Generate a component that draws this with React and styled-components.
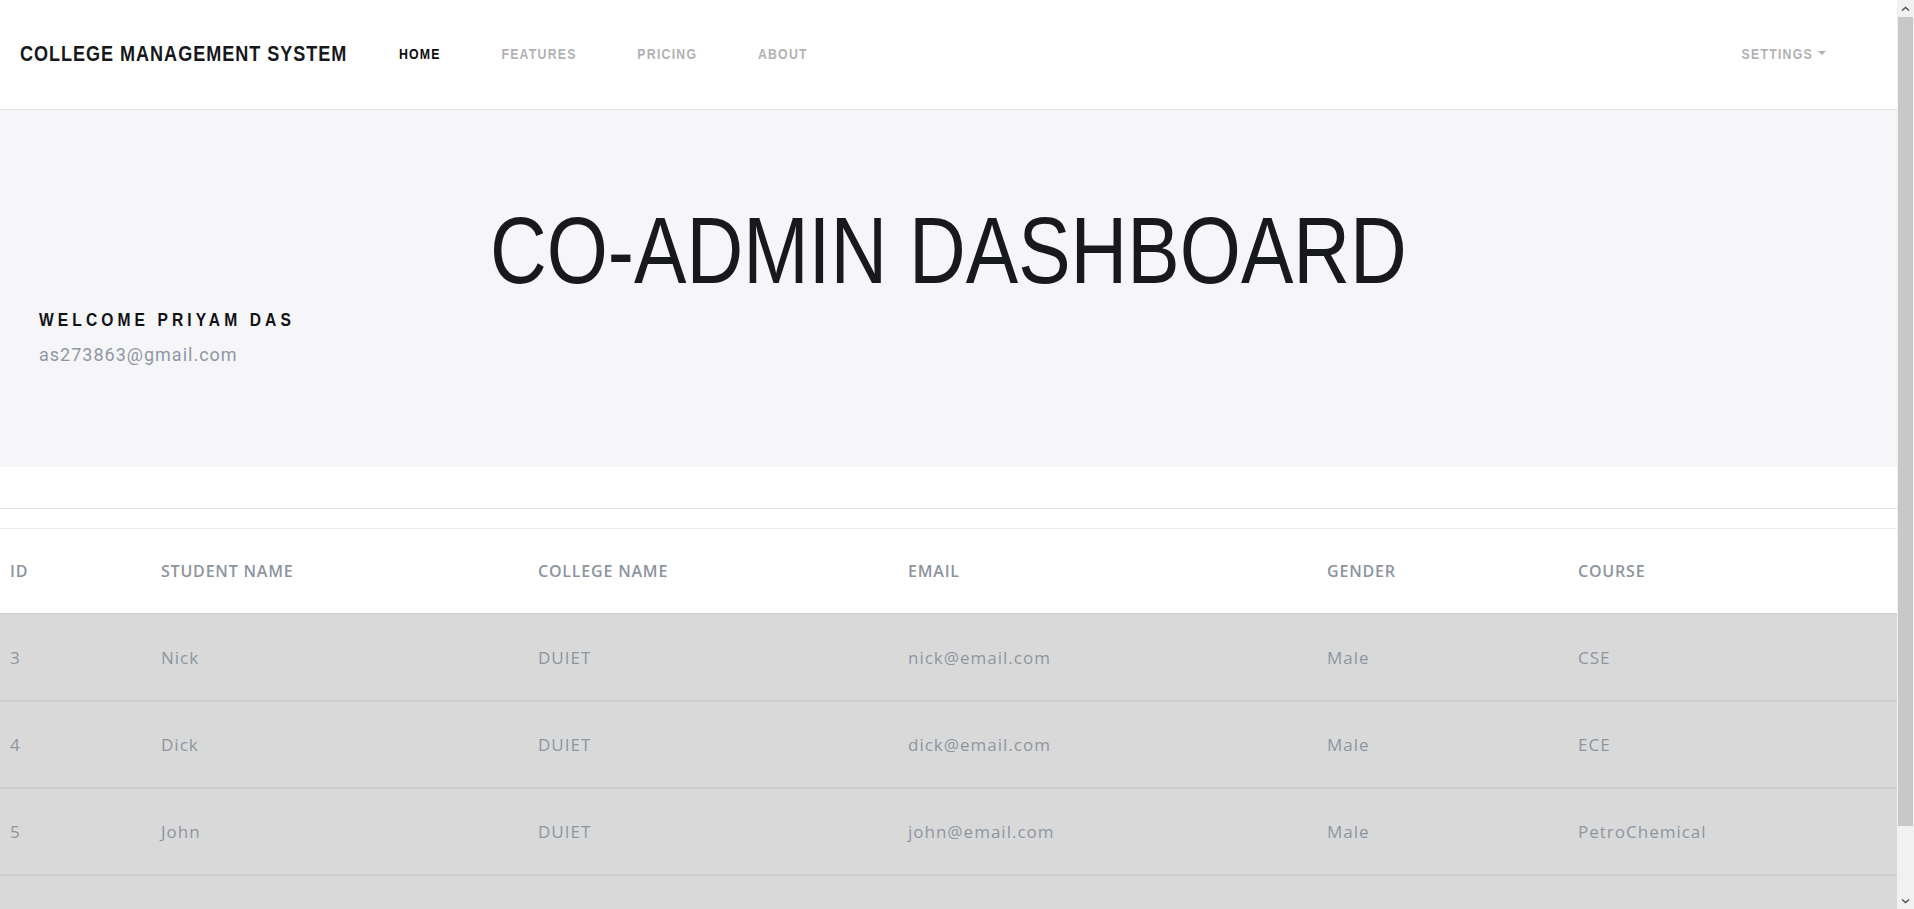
import React from 'react';
import styled, { createGlobalStyle } from 'styled-components';

const GlobalStyle = createGlobalStyle`
  * { box-sizing: border-box; }
  body {
    margin: 0;
    overflow: hidden;
    background: #ffffff;
    font-family: "Open Sans", "Liberation Sans", sans-serif;
  }
`;

// no narrow face installed, so the condensed headings squeeze Liberation Sans
const narrow = `"Liberation Sans", Arial, sans-serif`;

const students = [
  { id: 3, name: 'Nick', college: 'DUIET', email: 'nick@email.com', gender: 'Male', course: 'CSE' },
  { id: 4, name: 'Dick', college: 'DUIET', email: 'dick@email.com', gender: 'Male', course: 'ECE' },
  { id: 5, name: 'John', college: 'DUIET', email: 'john@email.com', gender: 'Male', course: 'PetroChemical' },
  { id: 6, name: 'Harry', college: 'DUIET', email: 'harry@email.com', gender: 'Male', course: 'ME' },
];

const Chevron = ({ down }) => (
  <svg width="9" height="6" viewBox="0 0 9 6">
    <polyline
      points={down ? '1,1.5 4.5,4.5 8,1.5' : '1,4.5 4.5,1.5 8,4.5'}
      fill="none"
      stroke="#505050"
      strokeWidth="1.4"
    />
  </svg>
);

const App = () => (
  <Window>
    <GlobalStyle />
    <Page>
      <NavBar>
        <NavGroup>
          <Brand>College Management System</Brand>
          <NavLinks>
            <NavLink active>Home</NavLink>
            <NavLink>Features</NavLink>
            <NavLink>Pricing</NavLink>
            <NavLink>About</NavLink>
          </NavLinks>
        </NavGroup>
        <Settings>
          Settings
          <Caret />
        </Settings>
      </NavBar>

      <Hero>
        <TitleRow>
          <Title>CO-ADMIN DASHBOARD</Title>
        </TitleRow>
        <Welcome>Welcome Priyam Das</Welcome>
        <Email>as273863@gmail.com</Email>
      </Hero>

      <Divider />

      <Table>
        <thead>
          <tr>
            <Th width="151px">ID</Th>
            <Th width="377px">Student Name</Th>
            <Th width="370px">College Name</Th>
            <Th width="419px">Email</Th>
            <Th width="251px">Gender</Th>
            <Th>Course</Th>
          </tr>
        </thead>
        <tbody>
          {students.map((s) => (
            <Row key={s.id}>
              <Td>{s.id}</Td>
              <Td>{s.name}</Td>
              <Td>{s.college}</Td>
              <Td>{s.email}</Td>
              <Td>{s.gender}</Td>
              <Td>{s.course}</Td>
            </Row>
          ))}
        </tbody>
      </Table>
    </Page>

    <ScrollBar>
      <ScrollButton><Chevron /></ScrollButton>
      <ScrollTrack>
        <ScrollThumb />
      </ScrollTrack>
      <ScrollButton><Chevron down /></ScrollButton>
    </ScrollBar>
  </Window>
);

const Window = styled.div`
  display: flex;
  height: 100vh;
`;

const Page = styled.main`
  flex: 1;
  min-width: 0;
  overflow: hidden;
`;

const ScrollBar = styled.aside`
  width: 17px;
  flex-shrink: 0;
  display: flex;
  flex-direction: column;
  background: #f1f1f1;
`;

const ScrollButton = styled.div`
  height: 17px;
  display: flex;
  align-items: center;
  justify-content: center;
`;

const ScrollTrack = styled.div`
  flex: 1;
  padding: 0 1px;
`;

const ScrollThumb = styled.div`
  height: 809px;
  background: #c8c8c8;
`;

const NavBar = styled.nav`
  display: flex;
  align-items: center;
  justify-content: space-between;
  height: 110px;
  padding: 0 71px 2px 20px;
  background: #ffffff;
  border-bottom: 1px solid #e3e3e6;
`;

const NavGroup = styled.div`
  display: flex;
  align-items: center;
  transform: scaleX(0.82);
  transform-origin: left center;
`;

const Brand = styled.div`
  font-family: ${narrow};
  font-size: 22px;
  font-weight: 700;
  letter-spacing: 1.2px;
  text-transform: uppercase;
  white-space: nowrap;
  color: #16181c;
  margin-right: 26px;
`;

const NavLinks = styled.ul`
  display: flex;
  list-style: none;
  margin: 0;
  padding: 0;
`;

const NavLink = styled.li`
  padding: 0 37px;
  font-family: ${narrow};
  font-size: 15px;
  font-weight: 700;
  letter-spacing: 1.5px;
  text-transform: uppercase;
  color: ${(p) => (p.active ? '#0b0b0d' : '#b2b2b4')};
  cursor: pointer;
`;

const Settings = styled.div`
  display: flex;
  align-items: center;
  gap: 6px;
  font-family: ${narrow};
  font-size: 15px;
  font-weight: 700;
  letter-spacing: 1.5px;
  text-transform: uppercase;
  color: #b2b2b4;
  transform: scaleX(0.82);
  transform-origin: right center;
`;

const Caret = styled.span`
  width: 0;
  height: 0;
  border-left: 5px solid transparent;
  border-right: 5px solid transparent;
  border-top: 4px solid #b2b2b4;
  margin-top: -2px;
`;

const Hero = styled.section`
  background: #f6f6f8;
  padding: 94px 39px 102px;
`;

const TitleRow = styled.div`
  display: flex;
  justify-content: center;
`;

const Title = styled.h1`
  margin: 0;
  font-family: ${narrow};
  font-weight: 400;
  font-size: 94px;
  line-height: 1;
  white-space: nowrap;
  color: #17191c;
  transform: scaleX(0.836);
`;

const Welcome = styled.h3`
  margin: 11px 0 0;
  font-family: ${narrow};
  font-size: 19px;
  font-weight: 700;
  letter-spacing: 5px;
  text-transform: uppercase;
  white-space: nowrap;
  color: #111216;
  transform: scaleX(0.82);
  transform-origin: left center;
`;

const Email = styled.p`
  margin: 13px 0 0;
  font-family: Roboto, "Liberation Sans", sans-serif;
  font-size: 18px;
  letter-spacing: 1px;
  color: #8e96a3;
`;

const Divider = styled.hr`
  margin: 41px 0 0;
  border: 0;
  border-top: 1px solid #e3e3e6;
  height: 0;
`;

const Table = styled.table`
  width: 100%;
  margin: 19px 0;
  border-collapse: collapse;
  border-top: 1px solid #ececee;
`;

const Th = styled.th`
  width: ${(p) => p.width || 'auto'};
  height: 85px;
  padding: 0 10px;
  text-align: left;
  font-weight: 600;
  font-size: 16px;
  letter-spacing: 0.8px;
  text-transform: uppercase;
  color: #8c949e;
  border-bottom: 2px solid #d2d2d4;
`;

const Row = styled.tr`
  background: #d9d9d9;
  border-bottom: 2px solid #cdcdcf;
`;

const Td = styled.td`
  height: 87px;
  padding: 0 10px;
  font-size: 17px;
  letter-spacing: 1px;
  color: #8d96a0;
`;

export default App;
